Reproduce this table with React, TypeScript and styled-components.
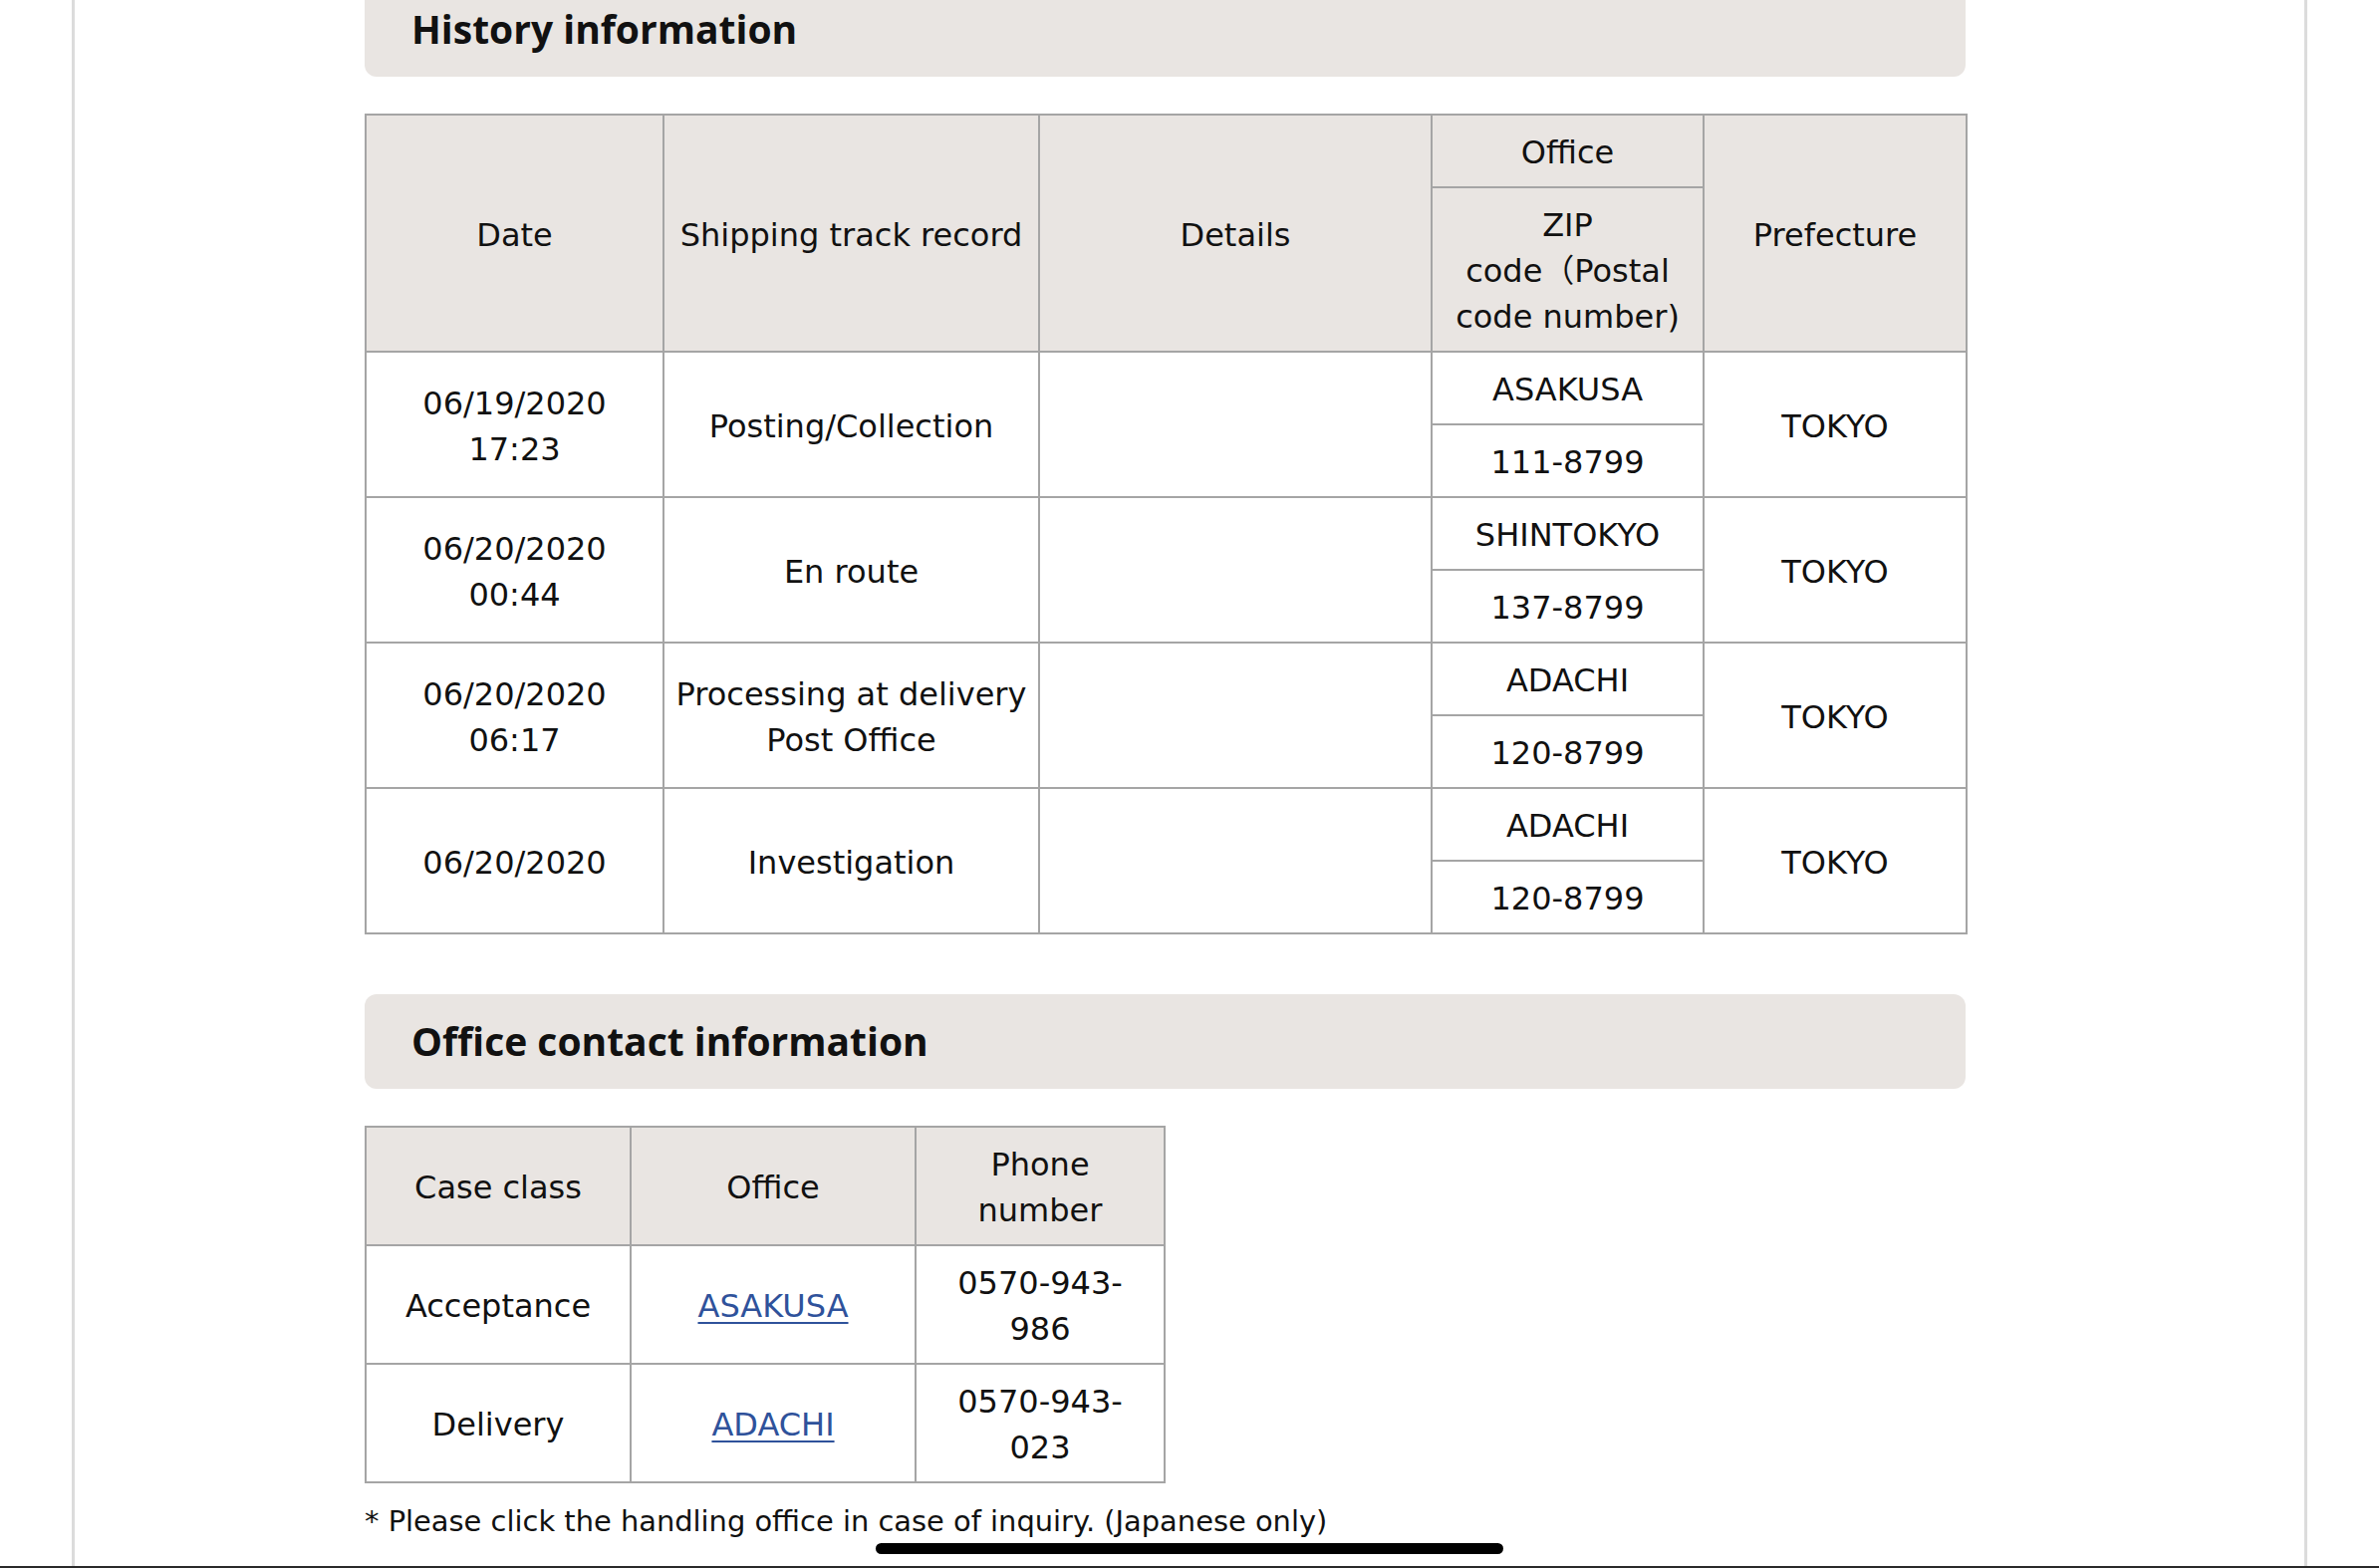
import React from 'react';
import styled, { createGlobalStyle } from 'styled-components';

const GlobalStyle = createGlobalStyle`
  html, body {
    margin: 0;
    padding: 0;
    background: #ffffff;
  }
  body {
    font-family: "DejaVu Sans", "Noto Sans CJK JP", sans-serif;
    color: #111111;
  }
`;

const Page = styled.div`
  position: relative;
  height: 1574px;
  overflow: hidden;
  background: #ffffff;
`;

const Frame = styled.div`
  box-sizing: border-box;
  height: 100%;
  margin: 0 72px;
  border-left: 3px solid #dcdcdc;
  border-right: 3px solid #dcdcdc;
`;

const Content = styled.main`
  display: flex;
  flex-direction: column;
  align-items: flex-start;
  width: 1607px;
  padding-left: 291px;
`;

const SectionTitle = styled.h2<{ $first?: boolean }>`
  box-sizing: border-box;
  align-self: stretch;
  display: flex;
  align-items: center;
  height: 95px;
  margin: ${(p) => (p.$first ? '-18px' : '60px')} 0 0;
  padding: 0 0 3px 47px;
  background: #e9e5e2;
  border-radius: 12px;
  font-family: "Open Sans", "Noto Sans", sans-serif;
  font-weight: 700;
  font-size: 39px;
  color: #111111;
`;

const Table = styled.table<{ $width: number }>`
  width: ${(p) => p.$width}px;
  margin-top: 37px;
  border-collapse: collapse;
  table-layout: fixed;
  font-size: 32px;
  line-height: 46px;
`;

const HeadCell = styled.th`
  padding: 14px 8px 11px;
  border: 2px solid #a5a5a5;
  background: #e9e5e2;
  font-weight: 400;
  text-align: center;
  vertical-align: middle;
  white-space: nowrap;
`;

const Cell = styled.td`
  padding: 14px 8px 11px;
  border: 2px solid #a5a5a5;
  background: #ffffff;
  text-align: center;
  vertical-align: middle;
  white-space: nowrap;
`;

const OfficeLink = styled.a`
  color: #2f529b;
  text-decoration: underline;
  text-decoration-thickness: 2px;
  text-underline-offset: 5px;
`;

const Note = styled.p`
  margin: 14.5px 0 0;
  font-size: 28.9px;
  line-height: 46px;
  white-space: nowrap;
`;

const HomeIndicator = styled.div`
  position: absolute;
  left: 50%;
  bottom: 14px;
  width: 630px;
  height: 11px;
  margin-left: -315px;
  border-radius: 6px;
  background: #000000;
`;

const BottomEdge = styled.div`
  position: absolute;
  left: 0;
  right: 0;
  bottom: 0;
  height: 2px;
  background: #2a2a2a;
`;

const Lines: React.FC<{ lines: string[] }> = ({ lines }) => (
  <>
    {lines.map((l, i) => (
      <React.Fragment key={i}>
        {i > 0 && <br />}
        {l}
      </React.Fragment>
    ))}
  </>
);

const history = [
  { date: ['06/19/2020', '17:23'], record: ['Posting/Collection'], office: 'ASAKUSA', zip: '111-8799', pref: 'TOKYO' },
  { date: ['06/20/2020', '00:44'], record: ['En route'], office: 'SHINTOKYO', zip: '137-8799', pref: 'TOKYO' },
  { date: ['06/20/2020', '06:17'], record: ['Processing at delivery', 'Post Office'], office: 'ADACHI', zip: '120-8799', pref: 'TOKYO' },
  { date: ['06/20/2020'], record: ['Investigation'], office: 'ADACHI', zip: '120-8799', pref: 'TOKYO' },
];

const contacts = [
  { cls: 'Acceptance', office: 'ASAKUSA', phone: ['0570-943-', '986'] },
  { cls: 'Delivery', office: 'ADACHI', phone: ['0570-943-', '023'] },
];

export default function App() {
  return (
    <>
      <GlobalStyle />
      <Page>
        <Frame>
          <Content>
            <SectionTitle $first>History information</SectionTitle>
            <Table $width={1607}>
              <colgroup>
                <col style={{ width: 299 }} />
                <col style={{ width: 377 }} />
                <col style={{ width: 394 }} />
                <col style={{ width: 273 }} />
                <col style={{ width: 264 }} />
              </colgroup>
              <thead>
                <tr>
                  <HeadCell rowSpan={2}>Date</HeadCell>
                  <HeadCell rowSpan={2}>Shipping track record</HeadCell>
                  <HeadCell rowSpan={2}>Details</HeadCell>
                  <HeadCell>Office</HeadCell>
                  <HeadCell rowSpan={2}>Prefecture</HeadCell>
                </tr>
                <tr>
                  <HeadCell>
                    <Lines lines={['ZIP', 'code（Postal', 'code number)']} />
                  </HeadCell>
                </tr>
              </thead>
              <tbody>
                {history.map((h, i) => (
                  <React.Fragment key={i}>
                    <tr>
                      <Cell rowSpan={2}>
                        <Lines lines={h.date} />
                      </Cell>
                      <Cell rowSpan={2}>
                        <Lines lines={h.record} />
                      </Cell>
                      <Cell rowSpan={2} />
                      <Cell>{h.office}</Cell>
                      <Cell rowSpan={2}>{h.pref}</Cell>
                    </tr>
                    <tr>
                      <Cell>{h.zip}</Cell>
                    </tr>
                  </React.Fragment>
                ))}
              </tbody>
            </Table>

            <SectionTitle>Office contact information</SectionTitle>
            <Table $width={802}>
              <colgroup>
                <col style={{ width: 266 }} />
                <col style={{ width: 286 }} />
                <col style={{ width: 250 }} />
              </colgroup>
              <thead>
                <tr>
                  <HeadCell>Case class</HeadCell>
                  <HeadCell>Office</HeadCell>
                  <HeadCell>
                    <Lines lines={['Phone', 'number']} />
                  </HeadCell>
                </tr>
              </thead>
              <tbody>
                {contacts.map((c) => (
                  <tr key={c.cls}>
                    <Cell>{c.cls}</Cell>
                    <Cell>
                      <OfficeLink href="#">{c.office}</OfficeLink>
                    </Cell>
                    <Cell>
                      <Lines lines={c.phone} />
                    </Cell>
                  </tr>
                ))}
              </tbody>
            </Table>
            <Note>* Please click the handling office in case of inquiry. (Japanese only)</Note>
          </Content>
        </Frame>
        <HomeIndicator />
        <BottomEdge />
      </Page>
    </>
  );
}
